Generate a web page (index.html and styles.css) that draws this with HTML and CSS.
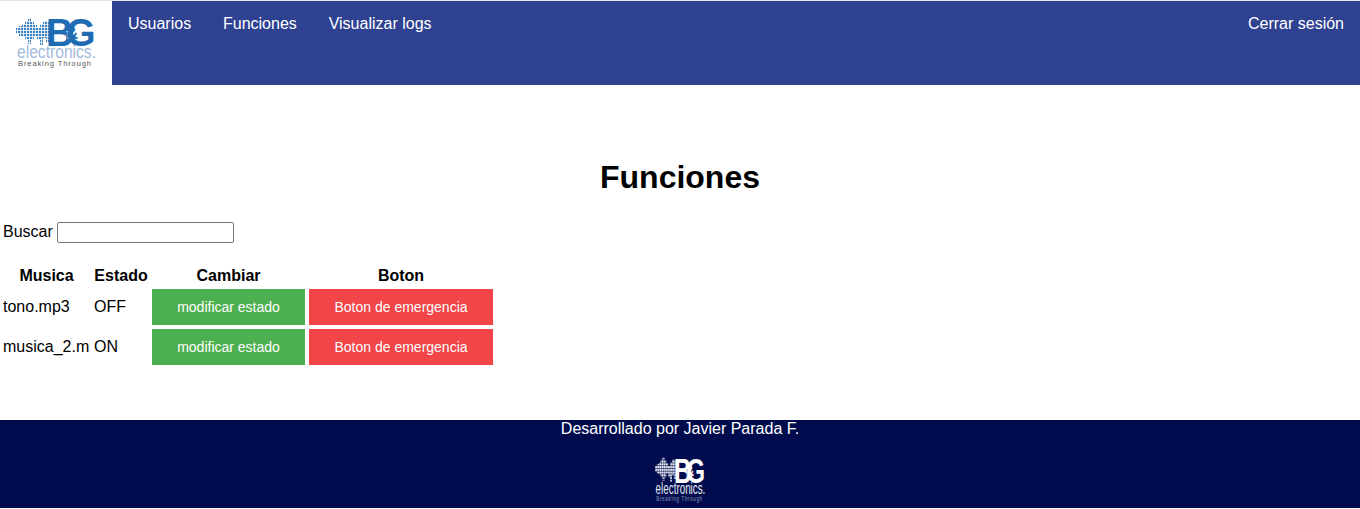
FILE: index.html
```html
<!DOCTYPE html>
<html lang="es">
<head>
<meta charset="utf-8">
<title>Funciones</title>
<link rel="stylesheet" href="styles.css">
</head>
<body>
<svg class="defs" width="0" height="0" aria-hidden="true">
  <defs>
    <pattern id="dots-blue" width="3" height="3" patternUnits="userSpaceOnUse">
      <rect width="2.2" height="2.2" fill="#3f83c4"/>
    </pattern>
    <pattern id="dots-white" width="3" height="3" patternUnits="userSpaceOnUse">
      <rect width="2.3" height="2.3" fill="#fff"/>
    </pattern>
  </defs>
</svg>
<header class="topbar">
  <a class="brand" href="#">
    <svg class="logo logo-color" viewBox="0 0 112 84" width="112" height="84" role="img" aria-label="B&amp;G electronics">
      <path fill="url(#dots-blue)" d="M16 27H19V25H22V23H25V20H28V17H31V21H34V24H37V27H40V23H43V20H49V37H49V41H46V37H43V44H40V39H37V35H34V39H31V43H28V39H25V36H22V35H19V33H16Z"/>
      <text class="logo-bg" x="46" y="45">B<tspan class="logo-amp" dx="-7" dy="-7">&amp;</tspan><tspan dx="-12" dy="7">G</tspan></text>
      <text class="logo-el" x="17" y="57" textLength="79" lengthAdjust="spacingAndGlyphs">electronics.</text>
      <text class="logo-tag" x="18" y="64.5" textLength="73" lengthAdjust="spacing">Breaking Through</text>
    </svg>
  </a>
  <nav class="nav">
    <a href="#">Usuarios</a>
    <a href="#">Funciones</a>
    <a href="#">Visualizar logs</a>
  </nav>
  <a class="logout" href="#">Cerrar sesión</a>
</header>
<main class="content">
  <h1 class="title">Funciones</h1>
  <div class="search">
    <label class="search-label" for="buscar">Buscar</label>
    <input id="buscar" class="search-input" type="text">
  </div>
  <table class="grid">
    <thead>
      <tr>
        <th class="col-music">Musica</th>
        <th class="col-state">Estado</th>
        <th class="col-change">Cambiar</th>
        <th class="col-alert">Boton</th>
      </tr>
    </thead>
    <tbody>
      <tr>
        <td class="col-music"><div class="clip">tono.mp3</div></td>
        <td class="col-state">OFF</td>
        <td><button class="btn btn-green" type="button">modificar estado</button></td>
        <td><button class="btn btn-red" type="button">Boton de emergencia</button></td>
      </tr>
      <tr>
        <td class="col-music"><div class="clip">musica_2.mp3</div></td>
        <td class="col-state">ON</td>
        <td><button class="btn btn-green" type="button">modificar estado</button></td>
        <td><button class="btn btn-red" type="button">Boton de emergencia</button></td>
      </tr>
    </tbody>
  </table>
</main>
<footer class="footer">
  <p class="credit">Desarrollado por Javier Parada F.</p>
  <svg class="logo logo-white" viewBox="16 16 81 50" width="51" height="46" preserveAspectRatio="none" role="img" aria-label="B&amp;G electronics">
    <path fill="url(#dots-white)" d="M16 27H19V25H22V23H25V20H28V17H31V21H34V24H37V27H40V23H43V20H49V37H49V41H46V37H43V44H40V39H37V35H34V39H31V43H28V39H25V36H22V35H19V33H16Z"/>
    <text class="logo-bg" x="46" y="45">B<tspan class="logo-amp" dx="-7" dy="-7">&amp;</tspan><tspan dx="-12" dy="7">G</tspan></text>
    <text class="logo-el" x="17" y="57" textLength="79" lengthAdjust="spacingAndGlyphs">electronics.</text>
    <text class="logo-tag" x="18" y="64.5" textLength="73" lengthAdjust="spacing">Breaking Through</text>
  </svg>
</footer>
</body>
</html>
```
FILE: styles.css
```css
* { box-sizing: border-box; }
html, body { margin: 0; padding: 0; }
body {
  font-family: "Liberation Sans", Arial, sans-serif;
  font-size: 16px;
  color: #000;
  background: #fff;
}
a { color: inherit; text-decoration: none; }
.defs { position: absolute; }

.topbar {
  display: flex;
  align-items: flex-start;
  height: 85px;
  border-top: 1px solid #e4e4e4;
  background: #2f4191;
  color: #fff;
  line-height: 18px;
}
.brand { display: block; width: 112px; height: 84px; background: #fff; }
.logo { display: block; overflow: visible; }
.nav { display: flex; gap: 31.85px; margin-left: 16px; padding-top: 14px; }
.logout { margin-left: auto; padding: 14px 16px 0 0; }

.logo-color .logo-bg { fill: #1f6cb2; }
.logo-color .logo-amp { fill: #1f6cb2; stroke: #fff; stroke-width: 0.9px; paint-order: stroke; }
.logo-color .logo-el { fill: #a3bbdb; }
.logo-color .logo-tag { fill: #555; }
.logo-white .logo-bg { fill: #fff; }
.logo-white .logo-amp { fill: #fff; stroke: #000c4e; stroke-width: 0.9px; paint-order: stroke; }
.logo-white .logo-el { fill: #e6e9f2; }
.logo-white .logo-tag { fill: #8f97b8; }
.logo-bg { font: 700 38px "Liberation Sans", sans-serif; }
.logo-bg .logo-amp { font-size: 16px; }
.logo-el { font: 400 18px "Liberation Sans", sans-serif; }
.logo-tag { font: 400 7.5px "Liberation Sans", sans-serif; }

.content { height: 335px; padding-top: 74px; }
.title {
  margin: 0;
  font-size: 32px;
  line-height: 37px;
  font-weight: 700;
  text-align: center;
}
.search {
  display: flex;
  align-items: flex-start;
  gap: 4px;
  height: 21px;
  margin: 26px 0 0 3px;
  line-height: 18px;
}
.search-label { padding-top: 1px; }
.search-input {
  width: 177px;
  height: 21px;
  margin: 0;
  padding: 1px 2px;
  border: 1px solid #767676;
  border-radius: 2px;
  background: #fff;
}

.grid {
  margin-top: 21px;
  border-collapse: separate;
  border-spacing: 2px;
  table-layout: fixed;
  width: 496px;
}
.grid th, .grid td { padding: 1px; line-height: 18px; }
.grid th { text-align: center; font-weight: 700; }
.grid td { text-align: left; }
.col-music { width: 89px; }
.col-state { width: 56px; }
.col-change { width: 155px; }
.col-alert { width: 186px; }
.clip { width: 87px; overflow: hidden; white-space: nowrap; }
.btn {
  display: block;
  width: 100%;
  height: 36px;
  margin: 0;
  padding: 0;
  border: 0;
  color: #fff;
  font: 14px/18px "Liberation Sans", Arial, sans-serif;
  cursor: pointer;
}
.btn-green { background: #4caf50; }
.btn-red { background: #f14548; }

.footer {
  display: flex;
  flex-direction: column;
  align-items: center;
  height: 88px;
  background: #000c4e;
  color: #fff;
}
.credit { margin: 0; line-height: 18px; }
.footer .logo { margin-top: 18px; }
```
